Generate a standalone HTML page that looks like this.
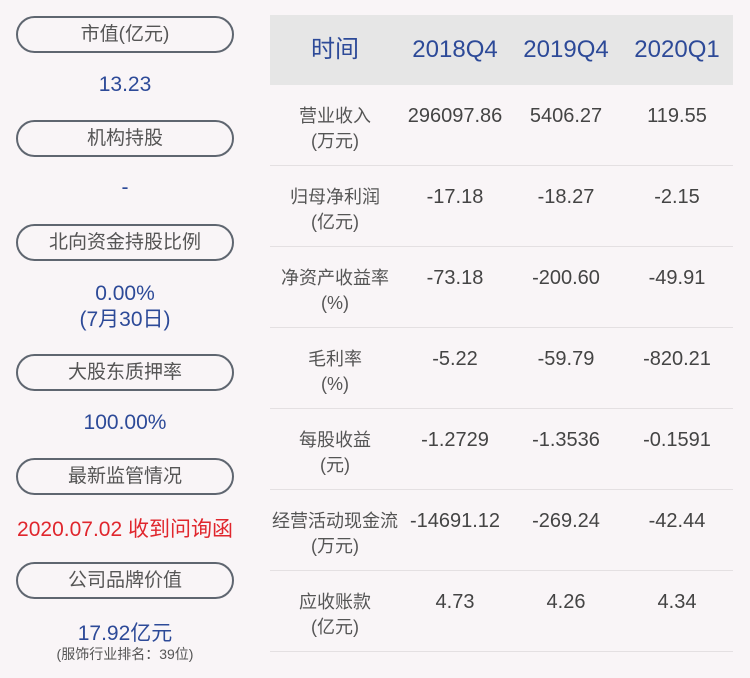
<html><head><style>
body{margin:0;width:750px;height:678px;background:#f9f5f7;font-family:"Liberation Sans","Noto Sans CJK SC",sans-serif;position:relative;overflow:hidden}
.p{position:absolute;left:16px;width:214px;height:33px;border:2px solid #5f6670;border-radius:19px;text-align:center;line-height:33px;font-size:19px;color:#555}
.v{position:absolute;left:16px;width:218px;text-align:center;color:#2d4a98;font-size:21px}
.hd{position:absolute;left:270px;top:15px;width:463px;height:70px;background:#e6e6e6}
.h{position:absolute;top:35px;height:30px;line-height:30px;font-size:24px;color:#2d4a98;text-align:center;width:110px}
.l{position:absolute;left:270px;width:130px;text-align:center;font-size:18px;color:#555;line-height:25px}
.n{position:absolute;width:112px;text-align:center;font-size:20px;color:#444}
.s{position:absolute;left:270px;width:463px;height:1px;background:#e4e0e2}
</style></head><body>
<div class="p" style="top:16px">市值(亿元)</div>
<div class="v" style="top:73px">13.23</div>
<div class="p" style="top:120px">机构持股</div>
<div class="v" style="top:176px">-</div>
<div class="p" style="top:224px">北向资金持股比例</div>
<div class="v" style="top:281px;line-height:26px">0.00%<br>(7月30日)</div>
<div class="p" style="top:354px">大股东质押率</div>
<div class="v" style="top:411px">100.00%</div>
<div class="p" style="top:458px">最新监管情况</div>
<div class="v" style="top:513px;color:#e0262d">2020.07.02 收到问询函</div>
<div class="p" style="top:562px">公司品牌价值</div>
<div class="v" style="top:617px">17.92亿元</div>
<div class="v" style="top:644px;font-size:14px;color:#555">(服饰行业排名：39位)</div>
<div class="hd"></div>
<div class="h" style="left:280px">时间</div>
<div class="h" style="left:400px">2018Q4</div>
<div class="h" style="left:511px">2019Q4</div>
<div class="h" style="left:622px">2020Q1</div>

<div class="l" style="top:104px">营业收入<br>(万元)</div>
<div class="n" style="left:399px;top:105px">296097.86</div><div class="n" style="left:510px;top:105px">5406.27</div><div class="n" style="left:621px;top:105px">119.55</div>
<div class="s" style="top:165px"></div>
<div class="l" style="top:185px">归母净利润<br>(亿元)</div>
<div class="n" style="left:399px;top:186px">-17.18</div><div class="n" style="left:510px;top:186px">-18.27</div><div class="n" style="left:621px;top:186px">-2.15</div>
<div class="s" style="top:246px"></div>
<div class="l" style="top:266px">净资产收益率<br>(%)</div>
<div class="n" style="left:399px;top:267px">-73.18</div><div class="n" style="left:510px;top:267px">-200.60</div><div class="n" style="left:621px;top:267px">-49.91</div>
<div class="s" style="top:327px"></div>
<div class="l" style="top:347px">毛利率<br>(%)</div>
<div class="n" style="left:399px;top:348px">-5.22</div><div class="n" style="left:510px;top:348px">-59.79</div><div class="n" style="left:621px;top:348px">-820.21</div>
<div class="s" style="top:408px"></div>
<div class="l" style="top:428px">每股收益<br>(元)</div>
<div class="n" style="left:399px;top:429px">-1.2729</div><div class="n" style="left:510px;top:429px">-1.3536</div><div class="n" style="left:621px;top:429px">-0.1591</div>
<div class="s" style="top:489px"></div>
<div class="l" style="top:509px">经营活动现金流<br>(万元)</div>
<div class="n" style="left:399px;top:510px">-14691.12</div><div class="n" style="left:510px;top:510px">-269.24</div><div class="n" style="left:621px;top:510px">-42.44</div>
<div class="s" style="top:570px"></div>
<div class="l" style="top:590px">应收账款<br>(亿元)</div>
<div class="n" style="left:399px;top:591px">4.73</div><div class="n" style="left:510px;top:591px">4.26</div><div class="n" style="left:621px;top:591px">4.34</div>
<div class="s" style="top:651px"></div>
</body></html>
